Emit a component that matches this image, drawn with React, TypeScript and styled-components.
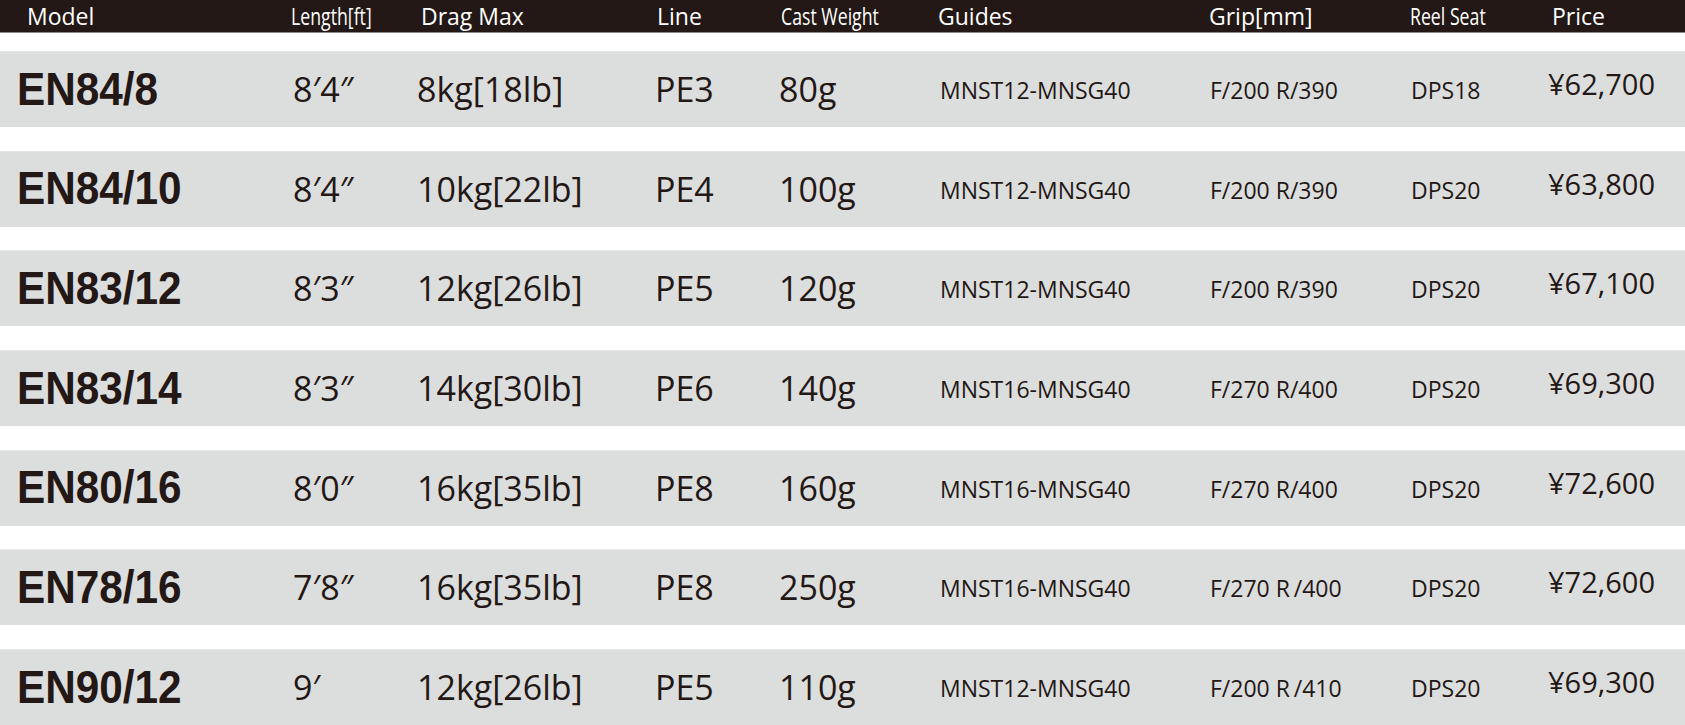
import React from 'react';
import styled, { createGlobalStyle } from 'styled-components';

const GlobalStyle = createGlobalStyle`
    html, body {
        margin: 0;
        padding: 0;
        background: #ffffff;
    }
    body {
        font-family: "Open Sans", "Noto Sans", "DejaVu Sans", sans-serif;
        color: #231815;
    }
`;

const SANS = `"Open Sans", "Noto Sans", "DejaVu Sans", sans-serif`;
const GOTHIC = `"Liberation Sans", Arial, sans-serif`;

const COLUMNS = '276px 124px 238px 124px 161px 270px 201px 137px 1fr';

const Page = styled.div`
    width: 1685px;
    overflow: hidden;
`;

const HeaderBar = styled.div`
    display: grid;
    grid-template-columns: ${COLUMNS};
    align-items: center;
    height: 32px;
    padding-left: 17px;
    background: #231815;
    border-bottom: 1px solid #8e8a89;
`;

// narrow titles are squeezed, the catalogue uses a condensed cut for them
const HeaderCell = styled.div<{ $narrow?: boolean; $shift: number }>`
    font-family: ${SANS};
    font-size: 23px;
    line-height: 1;
    color: #ffffff;
    white-space: nowrap;
    margin-left: ${p => p.$shift}px;
    transform-origin: left center;
    transform: ${p => (p.$narrow ? 'scaleX(0.77)' : 'none')};
`;

const Body = styled.div`
    display: flex;
    flex-direction: column;
    gap: 23.7px;
    padding-top: 18px;
`;

const Row = styled.div`
    display: grid;
    grid-template-columns: ${COLUMNS};
    align-items: center;
    height: 76px;
    padding-left: 17px;
    background: #dcdddd;
    box-shadow: inset 0 1px 0 #e6e7e7;
`;

type Kind = 'model' | 'big' | 'small' | 'price';

const Cell = styled.div<{ $kind: Kind }>`
    white-space: nowrap;
    line-height: 1;
    color: #231815;
    ${p => {
        switch (p.$kind) {
            case 'model':
                return `
                    font-family: ${GOTHIC};
                    font-weight: 700;
                    font-size: 47px;
                    margin-top: -2px;
                    transform-origin: left center;
                    transform: scaleX(0.9);
                `;
            case 'big':
                return `
                    font-family: ${SANS};
                    font-size: 34px;
                `;
            case 'small':
                return `
                    font-family: ${SANS};
                    font-size: 23px;
                    margin-top: 3px;
                `;
            default:
                return `
                    font-family: ${SANS};
                    font-size: 29px;
                    margin-top: -11px;
                `;
        }
    }}
`;

const columns: { title: string; narrow?: boolean; shift: number; kind: Kind }[] = [
    { title: 'Model', shift: 10, kind: 'model' },
    { title: 'Length[ft]', narrow: true, shift: -2, kind: 'big' },
    { title: 'Drag Max', shift: 4, kind: 'big' },
    { title: 'Line', shift: 2, kind: 'big' },
    { title: 'Cast Weight', narrow: true, shift: 2, kind: 'big' },
    { title: 'Guides', shift: -2, kind: 'small' },
    { title: 'Grip[mm]', shift: -1, kind: 'small' },
    { title: 'Reel Seat', narrow: true, shift: -1, kind: 'small' },
    { title: 'Price', shift: 4, kind: 'price' },
];

const rods: string[][] = [
    ['EN84/8', '8\u20324\u2033', '8kg[18lb]', 'PE3', '80g', 'MNST12-MNSG40', 'F/200 R/390', 'DPS18', '¥62,700'],
    ['EN84/10', '8\u20324\u2033', '10kg[22lb]', 'PE4', '100g', 'MNST12-MNSG40', 'F/200 R/390', 'DPS20', '¥63,800'],
    ['EN83/12', '8\u20323\u2033', '12kg[26lb]', 'PE5', '120g', 'MNST12-MNSG40', 'F/200 R/390', 'DPS20', '¥67,100'],
    ['EN83/14', '8\u20323\u2033', '14kg[30lb]', 'PE6', '140g', 'MNST16-MNSG40', 'F/270 R/400', 'DPS20', '¥69,300'],
    ['EN80/16', '8\u20320\u2033', '16kg[35lb]', 'PE8', '160g', 'MNST16-MNSG40', 'F/270 R/400', 'DPS20', '¥72,600'],
    ['EN78/16', '7\u20328\u2033', '16kg[35lb]', 'PE8', '250g', 'MNST16-MNSG40', 'F/270 R\u2009/400', 'DPS20', '¥72,600'],
    ['EN90/12', '9\u2032', '12kg[26lb]', 'PE5', '110g', 'MNST12-MNSG40', 'F/200 R\u2009/410', 'DPS20', '¥69,300'],
];

const App: React.FC = () => (
    <Page>
        <GlobalStyle />
        <HeaderBar>
            {columns.map(col => (
                <HeaderCell key={col.title} $narrow={col.narrow} $shift={col.shift}>
                    {col.title}
                </HeaderCell>
            ))}
        </HeaderBar>
        <Body>
            {rods.map(rod => (
                <Row key={rod[0]}>
                    {rod.map((value, i) => (
                        <Cell key={i} $kind={columns[i].kind}>
                            {value}
                        </Cell>
                    ))}
                </Row>
            ))}
        </Body>
    </Page>
);

export default App;
